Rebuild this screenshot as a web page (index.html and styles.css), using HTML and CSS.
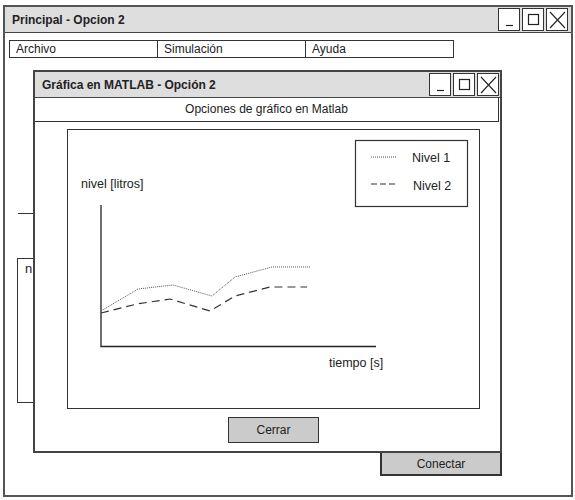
FILE: index.html
```html
<!DOCTYPE html>
<html>
<head>
<meta charset="utf-8">
<link rel="stylesheet" href="styles.css">
</head>
<body>
<div class="window main">
  <div class="titlebar">
    <span class="title">Principal - Opcion 2</span>
    <div class="controls">
      <span class="ctl"><svg width="19" height="20" viewBox="0 0 19 20"><path d="M6 15.5 H13" stroke="#222" stroke-width="1.2"/></svg></span>
      <span class="ctl"><svg width="19" height="20" viewBox="0 0 19 20"><rect x="4.5" y="4.5" width="10" height="10" fill="none" stroke="#222" stroke-width="1.2"/></svg></span>
      <span class="ctl"><svg width="19" height="20" viewBox="0 0 19 20"><path d="M2 2 L17 18 M17 2 L2 18" stroke="#222" stroke-width="1.1"/></svg></span>
    </div>
  </div>
  <div class="menu">
    <div class="menu-item">Archivo</div>
    <div class="menu-item">Simulación</div>
    <div class="menu-item">Ayuda</div>
  </div>
  <div class="ghost-line"></div>
  <div class="ghost-box">n</div>
  <div class="btn conectar">Conectar</div>

  <div class="window dialog">
    <div class="titlebar">
      <span class="title">Gráfica en MATLAB - Opción 2</span>
      <div class="controls">
        <span class="ctl"><svg width="19" height="20" viewBox="0 0 19 20"><path d="M6 15.5 H13" stroke="#222" stroke-width="1.2"/></svg></span>
        <span class="ctl"><svg width="19" height="20" viewBox="0 0 19 20"><rect x="4.5" y="4.5" width="10" height="10" fill="none" stroke="#222" stroke-width="1.2"/></svg></span>
        <span class="ctl"><svg width="19" height="20" viewBox="0 0 19 20"><path d="M2 2 L17 18 M17 2 L2 18" stroke="#222" stroke-width="1.1"/></svg></span>
      </div>
    </div>
    <div class="subheader">Opciones de gráfico en Matlab</div>
    <div class="chart">
      <svg class="plot" width="411" height="278" viewBox="68 131 411 278">
        <text class="lbl" x="81" y="189">nivel [litros]</text>
        <text class="lbl" x="329" y="368">tiempo [s]</text>
        <path d="M101 206 V347.5 H376" fill="none" stroke="#222" stroke-width="1.3"/>
        <polyline points="101,312 138,290 173,286 212,297 235,278 272,268 310,268" fill="none" stroke="#555" stroke-width="1" stroke-dasharray="1 1"/>
        <polyline points="101,314 137,305 170,300 210,312 235,297 270,288 307,288" fill="none" stroke="#333" stroke-width="1.2" stroke-dasharray="8 5"/>
        <rect x="355.5" y="141.5" width="112" height="66" fill="#fff" stroke="#333" stroke-width="1.2"/>
        <path d="M371 158 H397" stroke="#555" stroke-width="1" stroke-dasharray="1 1"/>
        <path d="M371 185 H397" stroke="#333" stroke-width="1.2" stroke-dasharray="6 3"/>
        <text class="lbl" x="412" y="163">Nivel 1</text>
        <text class="lbl" x="413" y="191">Nivel 2</text>
      </svg>
    </div>
    <div class="btn cerrar">Cerrar</div>
  </div>
</div>
</body>
</html>
```
FILE: styles.css
```css
* { box-sizing: border-box; }
body {
  margin: 0;
  background: #fff;
  font-family: "Liberation Sans", Arial, sans-serif;
  font-size: 12px;
  color: #222;
}
.window {
  border: 2px solid #555;
  background: #fff;
}
.main {
  position: relative;
  margin: 5px 0 0 3px;
  width: 570px;
  height: 492px;
}
.titlebar {
  display: flex;
  align-items: center;
  justify-content: space-between;
  background: #dedede;
  border-bottom: 1px solid #444;
  height: 26px;
  padding-left: 7px;
  padding-right: 3px;
}
.title {
  font-weight: bold;
  font-size: 12px;
}
.controls {
  display: flex;
  gap: 2px;
}
.ctl {
  display: flex;
  align-items: center;
  justify-content: center;
  width: 22px;
  height: 23px;
  border: 1px solid #333;
  background: #fff;
}
.menu {
  display: flex;
  margin: 7px 0 0 4px;
}
.menu-item {
  width: 149px;
  height: 18px;
  border: 1px solid #333;
  padding-left: 6px;
  line-height: 16px;
}
.menu-item + .menu-item { margin-left: -1px; }
.ghost-line {
  margin: 155px 0 0 13px;
  width: 200px;
  border-top: 1px solid #333;
}
.ghost-box {
  margin: 44px 0 0 12px;
  width: 200px;
  height: 145px;
  border: 1px solid #333;
  padding: 2px 7px;
  font-size: 13px;
}
.btn {
  display: flex;
  align-items: center;
  justify-content: center;
  background: #cbcbcb;
  font-size: 12px;
}
.conectar {
  margin: 48px 0 0 375px;
  width: 122px;
  height: 25px;
  border: 2px solid #333;
}
.dialog {
  position: absolute;
  left: 28px;
  top: 63px;
  width: 469px;
  height: 383px;
  border-color: #444;
  z-index: 2;
}
.dialog .titlebar {
  height: 26px;
  padding-right: 1px;
}
.subheader {
  width: 464px;
  height: 24px;
  border-right: 1px solid #333;
  border-bottom: 1px solid #333;
  text-align: center;
  line-height: 22px;
  font-size: 12px;
}
.chart {
  margin: 7px 0 0 32px;
  width: 413px;
  height: 280px;
  border: 1px solid #333;
}
.plot { display: block; }
.lbl {
  font-family: "Liberation Sans", Arial, sans-serif;
  font-size: 12.5px;
  fill: #222;
}
.cerrar {
  margin: 8px 0 0 193px;
  width: 91px;
  height: 26px;
  border: 1px solid #333;
}
```
